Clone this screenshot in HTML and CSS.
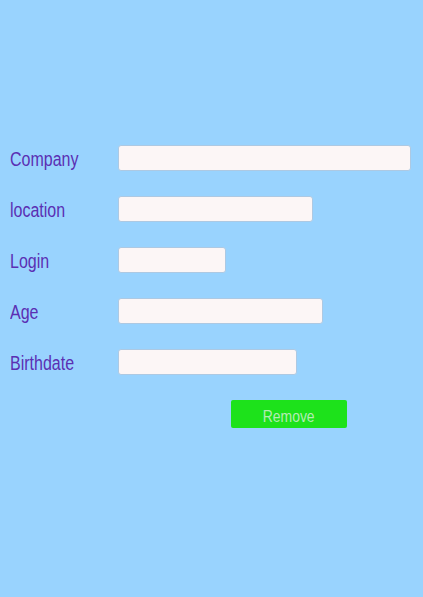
FILE: index.html
```html
<!DOCTYPE html>
<html lang="en">
<head>
    <meta charset="UTF-8">
    <meta name="viewport" content="width=device-width, initial-scale=1.0">
    <title>Profile</title>
    <link rel="stylesheet" href="styles.css">
</head>
<body>

<form class="profile-form">
    <div class="form-row">
        <label for="company"><span class="narrow">Company</span></label>
        <input type="text" id="company" class="field-company">
    </div>
    <div class="form-row">
        <label for="location"><span class="narrow">location</span></label>
        <input type="text" id="location" class="field-location">
    </div>
    <div class="form-row">
        <label for="login"><span class="narrow">Login</span></label>
        <input type="text" id="login" class="field-login">
    </div>
    <div class="form-row">
        <label for="age"><span class="narrow">Age</span></label>
        <input type="text" id="age" class="field-age">
    </div>
    <div class="form-row">
        <label for="birthdate"><span class="narrow">Birthdate</span></label>
        <input type="text" id="birthdate" class="field-birthdate">
    </div>
    <div class="actions">
        <button type="button" class="remove-btn"><span class="narrow">Remove</span></button>
    </div>
</form>

</body>
</html>
```

FILE: styles.css
```css
body {
    font-family: "Liberation Sans", Arial, sans-serif;
    background-color: #99d3fe;
    margin: 0;
    padding: 0;
    height: 597px;
}
/* Arial Narrow is Arial squeezed to ~80% width */
.narrow {
    display: inline-block;
    transform: scaleX(0.8);
    transform-origin: left center;
}
.profile-form {
    padding: 145px 0 0 10px;
}
.form-row {
    display: flex;
    align-items: center;
    height: 26px;
    margin-bottom: 25px;
}
.form-row label {
    width: 108px;
    font-size: 20px;
    color: #5b2fb3;
    padding-top: 2px;
}
.form-row input {
    box-sizing: border-box;
    height: 26px;
    margin: 0;
    padding: 0 4px;
    background-color: #fcf6f6;
    border: 1px solid #adc9e3;
    border-radius: 3px;
    outline: none;
}
.field-company { width: 293px; }
.field-location { width: 195px; }
.field-login { width: 108px; }
.field-age { width: 205px; }
.field-birthdate { width: 179px; }
.actions {
    padding-left: 221px;
}
.remove-btn {
    width: 116px;
    height: 28px;
    background-color: #1de21b;
    color: #b3ecb3;
    border: none;
    border-radius: 2px;
    font-family: inherit;
    font-size: 17px;
    padding: 5px 0 0;
}
.remove-btn .narrow {
    transform: scaleX(0.82);
    transform-origin: center center;
}
```
